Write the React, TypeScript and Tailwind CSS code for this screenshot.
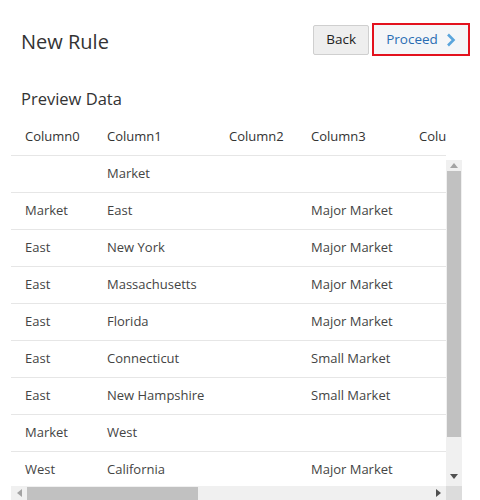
const columns = ["Column0", "Column1", "Column2", "Column3", "Column4"]
const widths = ["w-[82px]", "w-[122px]", "w-[82px]", "w-[108px]", "w-[120px]"]

const rows = [
  ["", "Market", "", "", ""],
  ["Market", "East", "", "Major Market", ""],
  ["East", "New York", "", "Major Market", ""],
  ["East", "Massachusetts", "", "Major Market", ""],
  ["East", "Florida", "", "Major Market", ""],
  ["East", "Connecticut", "", "Small Market", ""],
  ["East", "New Hampshire", "", "Small Market", ""],
  ["Market", "West", "", "", ""],
  ["West", "California", "", "Major Market", ""],
]

const App = () => {
  return (
    <div
      className="w-[480px] h-[500px] bg-white overflow-hidden text-[#333]"
      style={{ fontFamily: '"Open Sans", "Noto Sans", sans-serif' }}
    >
      <div className="flex items-center justify-between pl-[21px] pr-[10px] pt-[23px]">
        <h1 className="pt-[4px] text-[20px] leading-none text-[#333]">New Rule</h1>
        <div className="flex items-center gap-[3px]">
          <button className="h-[30px] px-[12px] bg-[#eeeeee] border border-[#cfcfcf] rounded-[2px] text-[13.5px] text-[#222]">
            Back
          </button>
          <button className="h-[33px] w-[98px] border-2 border-[#e3121e] bg-[#f4f6f8] flex items-center justify-center gap-[8px] text-[13.5px] text-[#2a6db3]">
            Proceed
            <svg width="10" height="14" viewBox="0 0 10 14">
              <path d="M2 1.5 L7.5 7 L2 12.5" fill="none" stroke="#5aa5dc" strokeWidth="2.6" />
            </svg>
          </button>
        </div>
      </div>

      <h2 className="pl-[21px] mt-[35px] text-[16.5px] leading-none text-[#333]">Preview Data</h2>

      <div className="ml-[11px] w-[451px] mt-[12px]">
        <div className="w-[435px] h-[36px] overflow-hidden border-b border-[#e6e6e6] flex">
          {columns.map((c, i) => (
            <div key={c} className={`${widths[i]} shrink-0 pl-[14px] flex items-center text-[13px] text-[#333]`}>
              {c}
            </div>
          ))}
        </div>

        <div className="flex">
          <div className="w-[435px] h-[330px] overflow-hidden">
            {rows.map((r, ri) => (
              <div key={ri} className="h-[37px] flex border-b border-[#e6e6e6] shrink-0">
                {r.map((cell, ci) => (
                  <div
                    key={ci}
                    className={`${widths[ci]} shrink-0 pl-[14px] flex items-center text-[13px] text-[#444]`}
                  >
                    {cell}
                  </div>
                ))}
              </div>
            ))}
          </div>
          <div className="w-[16px] h-[326px] mt-[4px] bg-[#f0f0f0] flex flex-col">
            <div className="h-[11px] flex items-center justify-center">
              <svg width="8" height="5" viewBox="0 0 8 5">
                <path d="M0 5 L4 0 L8 5 Z" fill="#a3a3a3" />
              </svg>
            </div>
            <div className="h-[266px] mx-[1px] bg-[#c1c1c1]" />
            <div className="flex-1" />
            <div className="h-[19px] flex items-center justify-center">
              <svg width="8" height="5" viewBox="0 0 8 5">
                <path d="M0 0 L8 0 L4 5 Z" fill="#505050" />
              </svg>
            </div>
          </div>
        </div>

        <div className="flex h-[15px]">
          <div className="w-[435px] bg-[#f0f0f0] flex items-center">
            <div className="w-[16px] flex items-center justify-center">
              <svg width="5" height="8" viewBox="0 0 5 8">
                <path d="M5 0 L0 4 L5 8 Z" fill="#a3a3a3" />
              </svg>
            </div>
            <div className="w-[171px] h-[13px] bg-[#c1c1c1]" />
            <div className="flex-1" />
            <div className="w-[16px] flex items-center justify-center">
              <svg width="5" height="8" viewBox="0 0 5 8">
                <path d="M0 0 L5 4 L0 8 Z" fill="#505050" />
              </svg>
            </div>
          </div>
          <div className="w-[16px] bg-[#dcdcdc]" />
        </div>
      </div>
    </div>
  )
}

export default App
